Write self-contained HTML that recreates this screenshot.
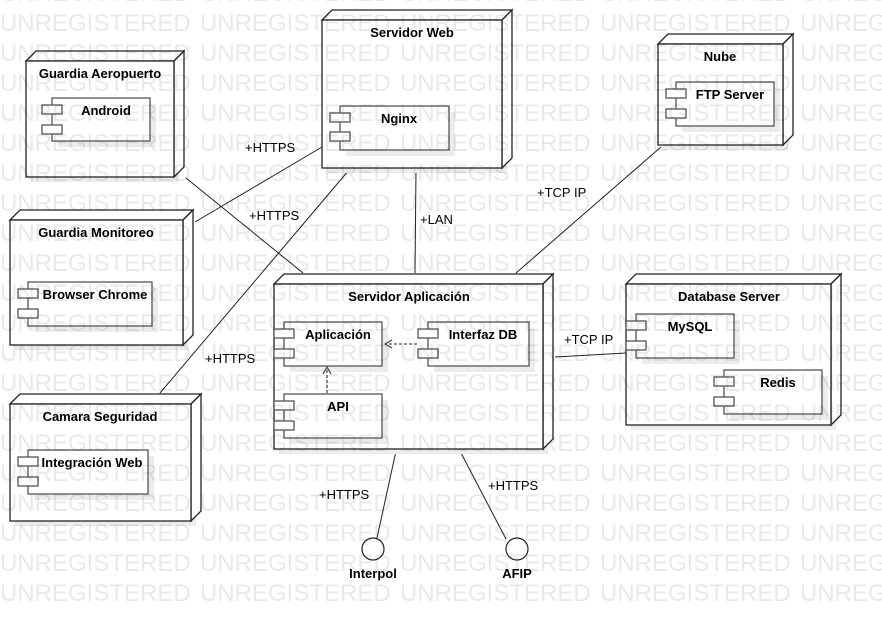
<!DOCTYPE html>
<html><head><meta charset="utf-8"><style>
html,body{margin:0;padding:0;background:#fff;width:882px;height:626px;overflow:hidden}
svg{display:block}
text{font-family:"Liberation Sans",sans-serif;font-size:13px;fill:#000}
.b{font-weight:bold;text-anchor:middle}
.n{fill:#fff;stroke:#222;stroke-width:1.3}
.s{fill:#ececec}
.c{fill:#fff;stroke:#555;stroke-width:1.3}
.l{stroke:#222;stroke-width:1;fill:none}
.w{font-size:24px;fill:#000;fill-opacity:0.085}
</style></head><body>
<svg width="882" height="626" viewBox="0 0 882 626" xmlns="http://www.w3.org/2000/svg">
<defs>
<pattern id="wm" x="0" y="0" width="200" height="30" patternUnits="userSpaceOnUse">
<text class="w" x="0" y="1">UNREGISTERED</text>
<text class="w" x="0" y="31">UNREGISTERED</text>
</pattern>
</defs>
<g class="l">
<line x1="186" y1="178" x2="303" y2="273"/>
<line x1="195" y1="222" x2="322" y2="147"/>
<line x1="160" y1="393" x2="349" y2="170"/>
<line x1="416" y1="170" x2="415" y2="273"/>
<line x1="661" y1="147" x2="516" y2="273"/>
<line x1="555" y1="357" x2="626" y2="353"/>
<line x1="396" y1="451" x2="377" y2="538"/>
<line x1="460" y1="451" x2="506" y2="539"/>
</g>
<g>
<text x="245" y="152">+HTTPS</text>
<text x="249" y="220">+HTTPS</text>
<text x="205" y="363">+HTTPS</text>
<text x="420" y="224">+LAN</text>
<text x="537" y="197">+TCP IP</text>
<text x="564" y="344">+TCP IP</text>
<text x="319" y="499">+HTTPS</text>
<text x="488" y="490">+HTTPS</text>
</g>

<rect class="s" x="31" y="66" width="148" height="116"/>
<polygon class="n" points="26,61 36,51 184,51 174,61"/>
<polygon class="n" points="174,61 184,51 184,167 174,177"/>
<rect class="n" x="26" y="61" width="148" height="116"/>
<text class="b" x="100" y="78">Guardia Aeropuerto</text>
<rect class="s" x="58" y="104" width="98" height="43"/>
<rect class="c" x="52" y="98" width="98" height="43"/>
<rect class="c" x="42" y="105" width="20" height="9"/>
<rect class="c" x="42" y="125" width="20" height="9"/>
<text class="b" x="106" y="115">Android</text>

<rect class="s" x="327" y="25" width="180" height="148"/>
<polygon class="n" points="322,20 332,10 512,10 502,20"/>
<polygon class="n" points="502,20 512,10 512,158 502,168"/>
<rect class="n" x="322" y="20" width="180" height="148"/>
<text class="b" x="412" y="37">Servidor Web</text>
<rect class="s" x="346" y="112" width="109" height="44"/>
<rect class="c" x="340" y="106" width="109" height="44"/>
<rect class="c" x="330" y="113" width="20" height="9"/>
<rect class="c" x="330" y="132" width="20" height="9"/>
<text class="b" x="399" y="123">Nginx</text>

<rect class="s" x="663" y="49" width="125" height="101"/>
<polygon class="n" points="658,44 668,34 793,34 783,44"/>
<polygon class="n" points="783,44 793,34 793,135 783,145"/>
<rect class="n" x="658" y="44" width="125" height="101"/>
<text class="b" x="720" y="61">Nube</text>
<rect class="s" x="682" y="88" width="98" height="44"/>
<rect class="c" x="676" y="82" width="98" height="44"/>
<rect class="c" x="666" y="89" width="20" height="9"/>
<rect class="c" x="666" y="109" width="20" height="9"/>
<text class="b" x="730" y="99">FTP Server</text>

<rect class="s" x="15" y="225" width="173" height="125"/>
<polygon class="n" points="10,220 20,210 193,210 183,220"/>
<polygon class="n" points="183,220 193,210 193,335 183,345"/>
<rect class="n" x="10" y="220" width="173" height="125"/>
<text class="b" x="96" y="237">Guardia Monitoreo</text>
<rect class="s" x="34" y="288" width="124" height="44"/>
<rect class="c" x="28" y="282" width="124" height="44"/>
<rect class="c" x="18" y="289" width="20" height="9"/>
<rect class="c" x="18" y="309" width="20" height="9"/>
<text class="b" x="95" y="299">Browser Chrome</text>

<rect class="s" x="15" y="409" width="181" height="117"/>
<polygon class="n" points="10,404 20,394 201,394 191,404"/>
<polygon class="n" points="191,404 201,394 201,511 191,521"/>
<rect class="n" x="10" y="404" width="181" height="117"/>
<text class="b" x="100" y="421">Camara Seguridad</text>
<rect class="s" x="34" y="456" width="120" height="44"/>
<rect class="c" x="28" y="450" width="120" height="44"/>
<rect class="c" x="18" y="457" width="20" height="9"/>
<rect class="c" x="18" y="477" width="20" height="9"/>
<text class="b" x="92" y="467">Integración Web</text>

<rect class="s" x="279" y="289" width="269" height="165"/>
<polygon class="n" points="274,284 284,274 553,274 543,284"/>
<polygon class="n" points="543,284 553,274 553,439 543,449"/>
<rect class="n" x="274" y="284" width="269" height="165"/>
<text class="b" x="409" y="301">Servidor Aplicación</text>
<rect class="s" x="290" y="328" width="98" height="44"/>
<rect class="c" x="284" y="322" width="98" height="44"/>
<rect class="c" x="274" y="329" width="20" height="9"/>
<rect class="c" x="274" y="349" width="20" height="9"/>
<text class="b" x="338" y="339">Aplicación</text>
<rect class="s" x="434" y="328" width="101" height="44"/>
<rect class="c" x="428" y="322" width="101" height="44"/>
<rect class="c" x="418" y="329" width="20" height="9"/>
<rect class="c" x="418" y="349" width="20" height="9"/>
<text class="b" x="483" y="339">Interfaz DB</text>
<rect class="s" x="290" y="400" width="98" height="44"/>
<rect class="c" x="284" y="394" width="98" height="44"/>
<rect class="c" x="274" y="401" width="20" height="9"/>
<rect class="c" x="274" y="421" width="20" height="9"/>
<text class="b" x="338" y="411">API</text>
<g stroke="#555" stroke-width="1.3" fill="none">
<line x1="417" y1="344" x2="386" y2="344" stroke-dasharray="3,2"/>
<polyline points="392,340 385,344 392,348"/>
<line x1="327" y1="393" x2="327" y2="368" stroke-dasharray="3,2"/>
<polyline points="323,374 327,367 331,374"/>
</g>

<rect class="s" x="631" y="289" width="205" height="141"/>
<polygon class="n" points="626,284 636,274 841,274 831,284"/>
<polygon class="n" points="831,284 841,274 841,415 831,425"/>
<rect class="n" x="626" y="284" width="205" height="141"/>
<text class="b" x="729" y="301">Database Server</text>
<rect class="s" x="642" y="320" width="98" height="44"/>
<rect class="c" x="636" y="314" width="98" height="44"/>
<rect class="c" x="626" y="321" width="20" height="9"/>
<rect class="c" x="626" y="341" width="20" height="9"/>
<text class="b" x="690" y="331">MySQL</text>
<rect class="s" x="730" y="376" width="98" height="44"/>
<rect class="c" x="724" y="370" width="98" height="44"/>
<rect class="c" x="714" y="377" width="20" height="9"/>
<rect class="c" x="714" y="397" width="20" height="9"/>
<text class="b" x="778" y="387">Redis</text>

<circle cx="373" cy="549" r="11" fill="#fff" stroke="#222" stroke-width="1.2"/>
<circle cx="517" cy="549" r="11" fill="#fff" stroke="#222" stroke-width="1.2"/>
<text class="b" x="373" y="578">Interpol</text>
<text class="b" x="517" y="578">AFIP</text>

<rect x="0" y="0" width="882" height="606" fill="url(#wm)"/>
</svg>
</body></html>
